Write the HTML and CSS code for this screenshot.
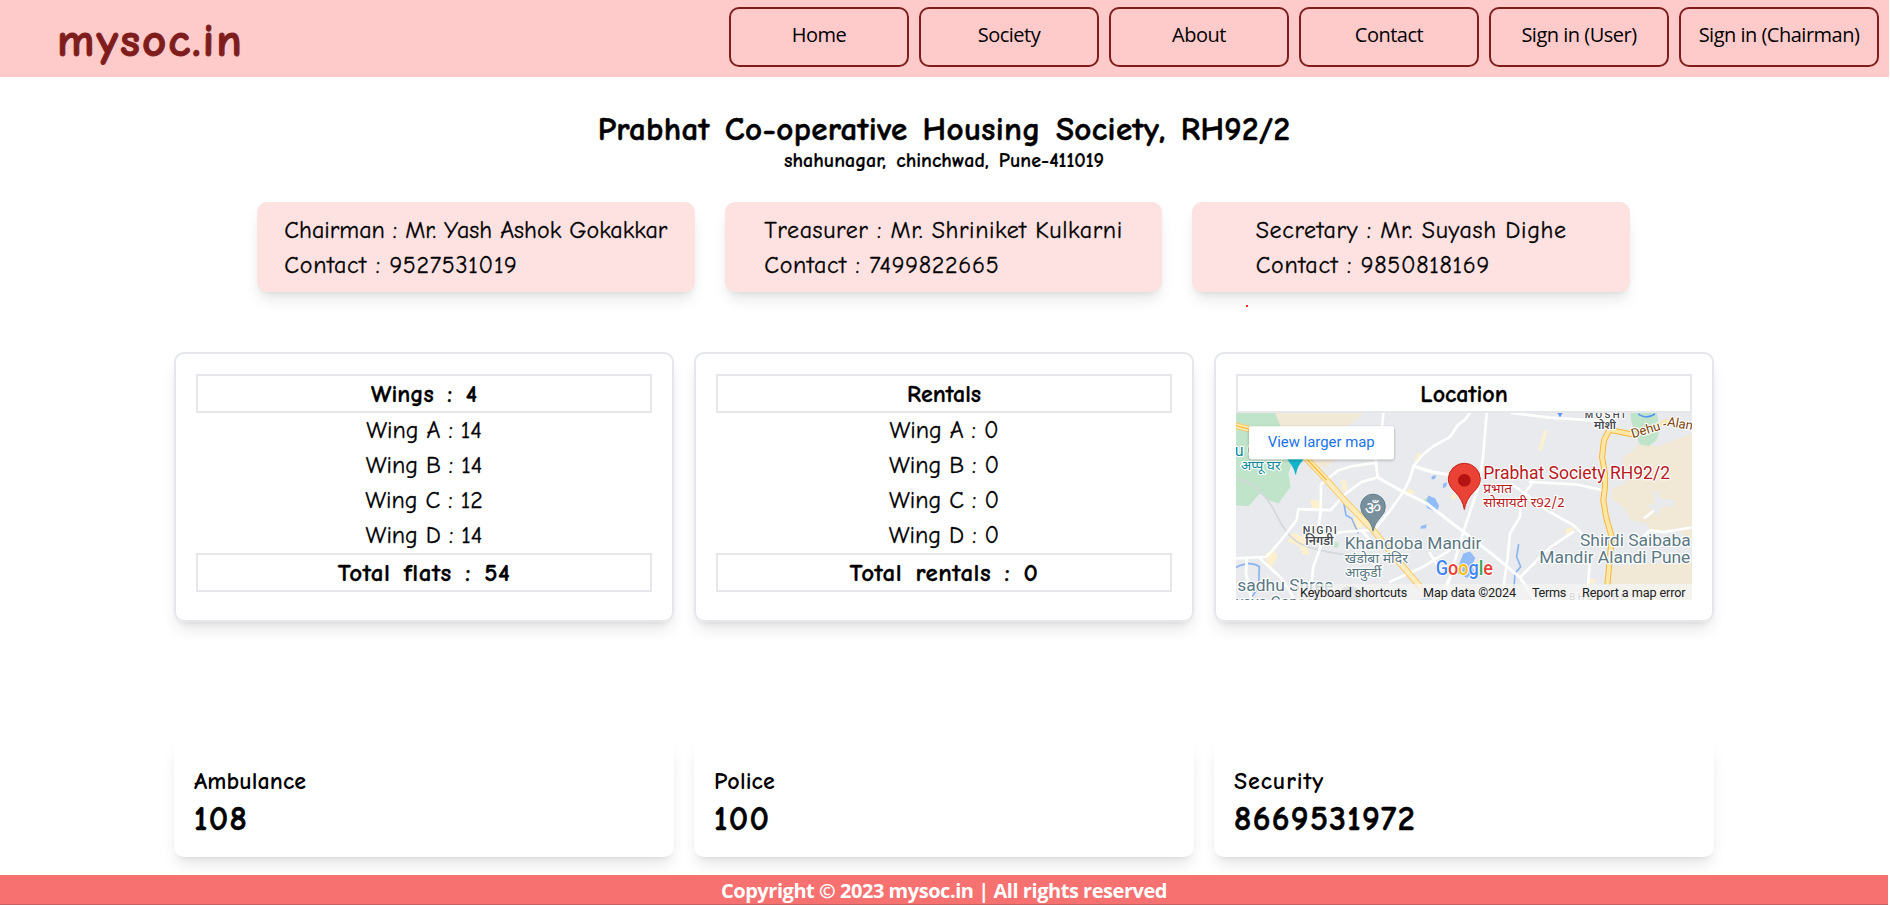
FILE: index.html
```html
<!DOCTYPE html>
<html lang="en">
<head>
<meta charset="utf-8">
<title>mysoc.in</title>
<link rel="stylesheet" href="styles.css">
</head>
<body>
<header class="topbar">
  <div class="brand">mysoc.in</div>
  <nav class="nav">
    <a class="nav-link">Home</a>
    <a class="nav-link">Society</a>
    <a class="nav-link">About</a>
    <a class="nav-link">Contact</a>
    <a class="nav-link">Sign in (User)</a>
    <a class="nav-link nav-link-wide">Sign in (Chairman)</a>
  </nav>
</header>

<main class="page">
  <section class="heading">
    <h1 class="title">Prabhat Co-operative Housing Society, RH92/2</h1>
    <p class="address">shahunagar, chinchwad, Pune-411019</p>
  </section>

  <section class="officers">
    <div class="officer"><div><p class="name-chairman">Chairman : Mr. Yash Ashok Gokakkar</p><p class="phone">Contact : 9527531019</p></div></div>
    <div class="officer"><div><p class="name-treasurer">Treasurer : Mr. Shriniket Kulkarni</p><p class="phone">Contact : 7499822665</p></div></div>
    <div class="officer"><div><p class="name-secretary">Secretary : Mr. Suyash Dighe</p><p class="phone">Contact : 9850818169</p></div><span class="dot"></span></div>
  </section>

  <section class="panels">
    <div class="panel">
      <h2 class="bar">Wings : 4</h2>
      <p>Wing A : 14</p><p>Wing B : 14</p><p>Wing C : 12</p><p>Wing D : 14</p>
      <h2 class="bar bar-total">Total flats : 54</h2>
    </div>
    <div class="panel">
      <h2 class="bar">Rentals</h2>
      <p>Wing A : 0</p><p>Wing B : 0</p><p>Wing C : 0</p><p>Wing D : 0</p>
      <h2 class="bar bar-total">Total rentals : 0</h2>
    </div>
    <div class="panel">
      <h2 class="bar">Location</h2>
      <svg class="map" viewBox="78 218 1368 562" preserveAspectRatio="none">
        <defs>
          <filter id="drop" x="-10%" y="-20%" width="120%" height="150%"><feDropShadow dx="0" dy="3" stdDeviation="4" flood-opacity=".3"/></filter>
        </defs>
        <rect x="78" y="218" width="1368" height="562" fill="#e8eaed"/>
        <!-- parks and open land -->
        <g fill="#f1e8d6">
          <path d="M195 218H462L430 245L400 262L410 330L350 380L300 385L270 340L210 262Z"/>
          <path d="M1446 280L1345 318L1290 305L1270 330L1240 350L1238 372L1262 400L1245 430L1205 445L1208 480L1240 500L1262 540L1310 550L1325 575L1400 570L1446 600ZM1330 455L1345 450L1350 475L1395 480L1390 500L1355 500L1345 530L1325 505L1310 498L1335 490Z" fill-rule="evenodd"/>
          <path d="M1205 680L1446 660V780H1190Z"/>
        </g>
        <g fill="#c0e4c9">
          <path d="M78 218H195L215 265L250 360L235 400L242 440L205 490L178 480L150 460L115 498L78 495Z"/>
          <path d="M1262 218H1340L1350 265L1340 300L1315 318L1290 312L1275 280L1262 235Z"/>
          <path d="M375 607h10v15h-14zM640 480l15-12 8 20-10 6zM1012 500l12 12-10 2z"/>
        </g>
        <g fill="#fdf0cc">
          <path d="M300 478l30 4 2 20-25 3zM238 580l20 0 30 15 10 50-20-2-10-25-32-12zM165 640l30-8 8 20-20 35-15-30zM395 420l14 0 2 30-14 4zM420 535l30-5 10 30-25 10zM595 445l20 8-8 12-20-6zM625 338l10 2-12 25-10-4zM1003 268l10 3-18 62-10-5zM1068 565l24-4-4 18-22 6zM1140 716l18 2-4 14-18-2zM722 468l14-10 6 14-12 8z"/>
        </g>
        <g fill="#92bcf8">
          <path d="M655 466l20 8 12 22-5 20-30-12-5-12zM665 408l14-4-4 12-10 2zM632 558l18-6-2 12-16 2zM700 430l12-4-4 14-10 4zM760 640l20-6 16 20-10 20 6 18-20 22-28-14 4-30z"/>
          <ellipse cx="650" cy="782" rx="22" ry="8"/>
          <path d="M1043 218h14l-7 14zM1285 218q20 20 50 0v6q-25 16-50 0z" fill="#5393f5"/>
        </g>
        <path d="M78 682Q120 660 148 680L146 740L120 780M402 490L408 525L425 535L445 580M926 612L920 650L932 680L915 700L912 740" fill="none" stroke="#8ab4f0" stroke-width="5"/>
        <path d="M78 415Q150 430 195 515Q230 590 270 610Q330 640 480 650" fill="none" stroke="#d4d7dc" stroke-width="5"/>
        <!-- streets -->
        <g fill="none" stroke="#fff" stroke-width="8" stroke-linejoin="round" stroke-linecap="round">
          <path d="M520 218L516 262M497 357L503 412M332 520L333 432L385 390L425 378L495 368M503 412L455 425L405 462L362 510L265 507L260 540L212 602L170 650L78 655"/>
          <path stroke-width="9" d="M503 412L580 455L650 490L760 575L850 645L930 712L975 780"/>
          <path d="M332 512L325 565L332 620L310 680L300 780M332 590L400 575L490 570M480 600L455 570"/>
          <path d="M780 218L765 238L742 256L720 290L670 318L640 342L612 375L598 420L580 455L545 505L492 572"/>
          <path stroke-width="10" d="M612 378L665 395L725 405"/>
          <path d="M830 218L820 340L808 430L785 500L760 575L735 660L715 730L700 780"/>
          <path d="M905 218L1020 232L1190 243M960 425L1100 433L1178 450M905 432L945 460L1010 510L1090 555L1135 600M970 425L933 472L930 530L900 580L893 650L880 745"/>
          <path d="M1090 575L1020 622L930 712M1140 650L1132 780M1300 590L1320 570L1360 576L1446 562M1305 532L1328 514"/>
          <path d="M110 655L108 700L125 780M150 655L215 715L255 780M540 725L640 680L720 630M660 640L690 690M690 780L715 720"/>
        </g>
        <!-- highways -->
        <g fill="none" stroke-linejoin="round">
          <path d="M78 256L120 267M280 345L350 420L412 490L490 570L545 640L632 742" stroke="#f9c45c" stroke-width="19"/>
          <path d="M78 256L120 267M280 345L350 420L412 490L490 570L545 640L632 742" stroke="#fdecbb" stroke-width="14"/>
          <path d="M78 256L120 267M280 345L350 420" stroke="#f9b934" stroke-width="4"/>
          <path d="M1200 265L1182 300L1176 350L1185 400V440L1180 480L1188 530L1205 590L1200 650L1192 735M1195 268L1270 283" stroke="#f9b63a" stroke-width="18"/>
          <path d="M1200 265L1182 300L1176 350L1185 400V440L1180 480L1188 530L1205 590L1200 650L1192 735M1195 268L1270 283M1335 262L1372 240" stroke="#fde7a6" stroke-width="12"/>
        </g>
        <!-- place labels -->
        <g class="map-label">
          <text x="74" y="346" class="teal" font-size="48">u G</text>
          <text x="92" y="390" class="teal hindi" font-size="38" textLength="120" lengthAdjust="spacingAndGlyphs">अप्पू घर</text>
          <text x="278" y="582" class="dark" font-size="32" font-weight="500" textLength="102">NIGDI</text>
          <text x="286" y="614" class="dark hindi" font-size="36" font-weight="600" textLength="84" lengthAdjust="spacingAndGlyphs">निगडी</text>
          <text x="404" y="627" class="slate" font-size="48" textLength="410" lengthAdjust="spacingAndGlyphs">Khandoba Mandir</text>
          <text x="404" y="670" class="slate hindi" font-size="40" textLength="190" lengthAdjust="spacingAndGlyphs">खंडोबा मंदिर</text>
          <text x="404" y="711" class="slate hindi" font-size="40" textLength="110" lengthAdjust="spacingAndGlyphs">आकुर्डी</text>
          <text x="82" y="752" class="slate" font-size="48" textLength="288" lengthAdjust="spacingAndGlyphs">sadhu Shree</text>
          <text x="78" y="803" class="slate" font-size="48" textLength="258" lengthAdjust="spacingAndGlyphs">yaya Ganesh</text>
          <text x="1124" y="234" class="dark" font-size="29" font-weight="500" textLength="120">MOSHI</text>
          <text x="1152" y="266" class="dark hindi" font-size="35" font-weight="600" textLength="66" lengthAdjust="spacingAndGlyphs">मोशी</text>
          <text x="1268" y="294" class="brown" font-size="39" transform="rotate(-17 1268 294)">Dehu -</text>
          <text x="1370" y="256" class="brown" font-size="39" transform="rotate(10 1370 256)">Alandi</text>
          <text x="1110" y="617" class="slate" font-size="48" textLength="332" lengthAdjust="spacingAndGlyphs">Shirdi Saibaba</text>
          <text x="988" y="669" class="slate" font-size="48" textLength="453" lengthAdjust="spacingAndGlyphs">Mandir Alandi Pune</text>
          <text x="1078" y="780" class="faint" font-size="29" font-weight="500" textLength="162">BHOSARI</text>
          <text x="820" y="416" class="red" font-size="53" textLength="560" lengthAdjust="spacingAndGlyphs">Prabhat Society RH92/2</text>
          <text x="820" y="459" class="red hindi" font-size="40" textLength="86" lengthAdjust="spacingAndGlyphs">प्रभात</text>
          <text x="820" y="500" class="red hindi" font-size="40" textLength="244" lengthAdjust="spacingAndGlyphs">सोसायटी र92/2</text>
        </g>
        <!-- markers -->
        <path d="M228 345H286Q278 362 266 376Q260 386 257 403Q253 386 246 376Q234 362 228 345Z" fill="#12b5cb" stroke="#0e9fb2" stroke-width="1"/>
        <path d="M489 573Q485 549 468 533Q452 518 452 499A37 37 0 0 1 526 499Q526 518 510 533Q494 549 489 573Z" fill="#78909c" stroke="#607d8b" stroke-width="3"/>
        <text x="489" y="521" class="om hindi" font-size="54" text-anchor="middle">ॐ</text>
        <path d="M390 780Q384 740 420 738Q456 740 450 780Z" fill="#a9b3b9"/>
        <path d="M763 508Q758 478 736 456Q715 436 715 417A48 48 0 0 1 811 417Q811 436 790 456Q768 478 763 508Z" fill="#ea4335" stroke="#c5221f" stroke-width="3"/>
        <circle cx="763" cy="420" r="19" fill="#b31412"/>
        <!-- controls -->
        <rect x="117" y="258" width="435" height="99" rx="6" fill="#fff" filter="url(#drop)"/>
        <text x="173" y="321" class="link" font-size="46" textLength="321" lengthAdjust="spacingAndGlyphs">View larger map</text>
        <text x="677" y="706" class="logo" font-size="60" textLength="172" lengthAdjust="spacingAndGlyphs"><tspan fill="#4285f4">G</tspan><tspan fill="#ea4335">o</tspan><tspan fill="#fbbc04">o</tspan><tspan fill="#4285f4">g</tspan><tspan fill="#34a853">l</tspan><tspan fill="#ea4335">e</tspan></text>
        <path d="M261 732H1446V780H261Z" fill="#f5f5f5" fill-opacity=".72"/>
        <g class="credit" font-size="38">
          <text x="270" y="771" textLength="322">Keyboard shortcuts</text>
          <text x="639" y="771" textLength="279">Map data ©2024</text>
          <text x="966" y="771" textLength="103">Terms</text>
          <text x="1116" y="771" textLength="311">Report a map error</text>
        </g>
      </svg>
    </div>
  </section>

  <section class="helplines">
    <div class="helpline"><h3 class="tight">Ambulance</h3><p>108</p></div>
    <div class="helpline"><h3 class="tight">Police</h3><p>100</p></div>
    <div class="helpline"><h3>Security</h3><p>8669531972</p></div>
  </section>
</main>
<footer class="footer">Copyright © 2023 mysoc.in | All rights reserved</footer>
</body>
</html>
```
FILE: styles.css
```css
* { box-sizing: border-box; }
body, h1, h2, h3, p { margin: 0; }
body {
  display: flex;
  flex-direction: column;
  height: 905px;
  overflow: hidden;
  background: #fff;
  color: #000;
  font-family: "Comic Sans MS", "Comic Neue", cursive;
}

.topbar {
  display: flex;
  justify-content: space-between;
  align-items: flex-start;
  flex: none;
  width: 1889px;
  height: 77px;
  padding: 7px 10px 0 57px;
  background: #fecaca;
}
.brand {
  padding-top: 6px;
  color: #7f1d1d;
  font-size: 47px;
  font-weight: 700;
  line-height: 56px;
  letter-spacing: 2px;
  -webkit-text-stroke: 1px #7f1d1d;
}
.nav { display: flex; gap: 10px; }
.nav-link {
  width: 180px;
  height: 60px;
  border: 2px solid #7f1d1d;
  border-radius: 10px;
  font: 400 20px/51px "Open Sans", sans-serif;
  letter-spacing: -0.5px;
  text-align: center;
}
.nav-link-wide { width: 200px; }

.page { flex: 1; width: 1888px; }
.heading { padding-top: 34px; text-align: center; }
.title {
  font-size: 33px;
  line-height: 36px;
  letter-spacing: 0.35px;
  word-spacing: 3px;
  -webkit-text-stroke: 0.5px #000;
}
.address {
  font-size: 20px;
  font-weight: 700;
  line-height: 28px;
  letter-spacing: 0;
  word-spacing: 3px;
  -webkit-text-stroke: 0.2px #000;
}

.officers {
  display: grid;
  grid-template-columns: repeat(3, 1fr);
  gap: 30px;
  width: 1373px;
  margin: 27px 0 0 257px;
}
.officer {
  position: relative;
  display: flex;
  justify-content: center;
  height: 90px;
  padding: 11px 10px 0;
  border-radius: 10px;
  background: #fee2e2;
  box-shadow: 0 10px 15px -3px rgba(0,0,0,.1), 0 4px 6px -4px rgba(0,0,0,.1);
  font-size: 24px;
  line-height: 35px;
  white-space: nowrap;
  -webkit-text-stroke: 0.3px #000;
}
.name-chairman { letter-spacing: 0; }
.name-treasurer { letter-spacing: 0.58px; }
.name-secretary { letter-spacing: 0.63px; }
.phone { letter-spacing: 0.7px; }
.dot {
  position: absolute;
  left: 54px;
  top: 103px;
  width: 2px;
  height: 2px;
  background: #ff2a2a;
}

.panels {
  display: grid;
  grid-template-columns: repeat(3, 500px);
  gap: 20px;
  width: 1540px;
  margin: 60px auto 0;
}
.panel {
  height: 270px;
  padding: 20px;
  border: 2px solid #e5e7eb;
  border-radius: 10px;
  box-shadow: 0 10px 15px -3px rgba(0,0,0,.1), 0 4px 6px -4px rgba(0,0,0,.1);
  font-size: 24px;
  line-height: 35px;
  text-align: center;
}
.panel p { -webkit-text-stroke: 0.3px #000; }
.bar {
  height: 39px;
  border: 2px solid #e5e7eb;
  font-size: 24px;
  line-height: 36px;
  word-spacing: 5px;
  -webkit-text-stroke: 0.3px #000;
}
.bar-total { font-size: 25px; letter-spacing: 0.5px; word-spacing: 4px; }

.map { display: block; width: 456px; height: 187px; overflow: hidden; }
.map text { font-family: Roboto, sans-serif; }
.map .hindi { font-family: "Noto Sans Devanagari", "Noto Sans", sans-serif; }
.map-label text { paint-order: stroke; stroke: #fff; stroke-width: 7px; stroke-linejoin: round; }
.teal { fill: #0d8a9a; }
.dark { fill: #45484d; }
.slate { fill: #5b7784; }
.brown { fill: #7d4409; }
.faint { fill: #8f9398; }
.red { fill: #b9181c; }
.om { fill: #fff; }
.link { fill: #1a73e8; }
.logo { stroke: #fff; stroke-width: 5px; paint-order: stroke; font-weight: 500; }
.credit { fill: #222; }

.helplines {
  display: grid;
  grid-template-columns: repeat(3, 500px);
  gap: 20px;
  width: 1540px;
  margin: 118px auto 0;
}
.helpline {
  height: 117px;
  padding: 23px 20px 0;
  border-radius: 10px;
  box-shadow: 0 10px 15px -3px rgba(0,0,0,.1), 0 4px 6px -4px rgba(0,0,0,.1);
}
.helpline h3 {
  font-size: 24px;
  font-weight: 600;
  line-height: 36px;
  letter-spacing: 0.9px;
}
.helpline .tight { letter-spacing: 0.1px; }
.helpline p {
  font-size: 34px;
  font-weight: 700;
  line-height: 40px;
  letter-spacing: 1.3px;
  -webkit-text-stroke: 0.5px #000;
}

.footer {
  flex: none;
  width: 1888px;
  height: 30px;
  border-bottom: 1px solid #c66164;
  background: #f87171;
  color: #fff;
  font: 700 20px/31px "Open Sans", sans-serif;
  letter-spacing: -0.46px;
  text-align: center;
}
```
